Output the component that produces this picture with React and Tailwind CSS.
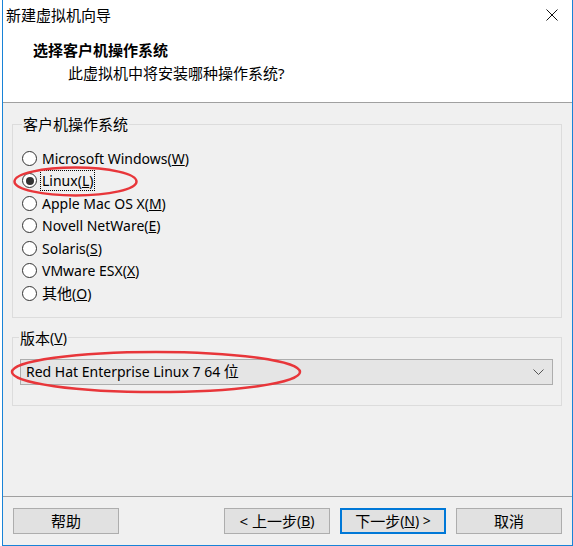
import React from 'react';

const FONT = { fontFamily: '"Noto Sans", "Noto Sans CJK SC", sans-serif' };

const options = [
  { label: 'Microsoft Windows', key: 'W' },
  { label: 'Linux', key: 'L', checked: true },
  { label: 'Apple Mac OS X', key: 'M' },
  { label: 'Novell NetWare', key: 'E' },
  { label: 'Solaris', key: 'S' },
  { label: 'VMware ESX', key: 'X' },
  { label: '其他', key: 'O', cjk: true },
];

const Radio = ({ label, keyChar, checked, cjk }) => (
  <div className="h-[22.5px] flex items-center">
    <span className="ml-[9px] w-[15px] h-[15px] rounded-full border border-[#333] bg-white flex items-center justify-center shrink-0">
      {checked && <span className="w-[8px] h-[8px] rounded-full bg-[#333]" />}
    </span>
    <span className={`ml-[4px] leading-[18px] px-[1px] ${checked ? 'outline outline-1 outline-dotted outline-black' : ''}`}>
      {cjk ? label : <span className="text-[14px]">{label}</span>}
      <span className="text-[14px]">
        (<u>{keyChar}</u>)
      </span>
    </span>
  </div>
);

const Btn = ({ children, primary }) => (
  <button
    className={`w-[106px] h-[26px] bg-[#e1e1e1] text-[15px] leading-none flex items-center justify-center ${
      primary ? 'border-2 border-[#0078d7]' : 'border border-[#adadad]'
    }`}
  >
    {children}
  </button>
);

export default function App() {
  return (
    <div className="relative w-[573px] h-[546px] bg-white pl-[2px] text-black text-[15px]" style={FONT}>
      <div className="h-full flex flex-col border-l border-r border-b border-[#1883d7]">
        {/* title bar */}
        <div className="h-[30px] flex items-center justify-between pl-[3px] bg-white">
          <span>新建虚拟机向导</span>
          <svg width="12" height="12" viewBox="0 0 12 12" className="mr-[14px]">
            <path d="M0.5 0.5 L11.5 11.5 M11.5 0.5 L0.5 11.5" stroke="#111" strokeWidth="1" />
          </svg>
        </div>

        {/* header */}
        <div className="h-[73px] bg-white pt-[10px] border-b border-[#a0a0a0]">
          <div className="pl-[30px] font-bold leading-[20px]">选择客户机操作系统</div>
          <div className="pl-[65px] mt-[3px] leading-[20px]">此虚拟机中将安装哪种操作系统?</div>
        </div>

        {/* body */}
        <div className="h-[393px] bg-[#f0f0f0] pt-[11px] pl-[9px]">
          <fieldset className="w-[550px] border border-[#dcdcdc] pt-[13px] pb-[12px]">
            <legend className="ml-[9px] px-[1px] leading-[20px]">客户机操作系统</legend>
            {options.map((o) => (
              <Radio key={o.key} label={o.label} keyChar={o.key} checked={o.checked} cjk={o.cjk} />
            ))}
          </fieldset>

          <fieldset className="mt-[10px] w-[550px] border border-[#dcdcdc] pt-[11px] pb-[20px]">
            <legend className="ml-[6px] px-[1px] h-[20px] leading-[20px] flex items-center">
              版本<span className="text-[14px]">(<u>V</u>)</span>
            </legend>
            <div className="ml-[7px] w-[533px] h-[26px] bg-[#e5e5e5] border border-[#adadad] flex items-center justify-between pl-[5px] pr-[8px]">
              <span>
                <span className="text-[14px]">Red Hat Enterprise Linux 7 64 </span>位
              </span>
              <svg width="11" height="6" viewBox="0 0 11 6">
                <path d="M0.5 0.5 L5.5 5.5 L10.5 0.5" fill="none" stroke="#555" strokeWidth="1" />
              </svg>
            </div>
          </fieldset>
        </div>

        {/* footer */}
        <div className="flex-1 bg-[#f0f0f0] border-t border-[#a0a0a0] pt-[11px] pl-[10px] pr-[10px] flex items-start justify-between">
          <Btn>帮助</Btn>
          <div className="flex gap-[10px]">
            <Btn>
              &lt; 上一步<span className="text-[14px]">(<u>B</u>)</span>
            </Btn>
            <Btn primary>
              下一步<span className="text-[14px]">(<u>N</u>) &gt;</span>
            </Btn>
            <Btn>取消</Btn>
          </div>
        </div>
      </div>

      {/* red annotation rings */}
      <svg className="absolute inset-0 pointer-events-none" width="573" height="546" viewBox="0 0 573 546">
        <ellipse cx="75.5" cy="181.5" rx="61" ry="14" fill="none" stroke="#e8363a" strokeWidth="2.5" />
        <ellipse cx="156" cy="372" rx="144" ry="20" fill="none" stroke="#e8363a" strokeWidth="2.5" />
      </svg>
    </div>
  );
}
